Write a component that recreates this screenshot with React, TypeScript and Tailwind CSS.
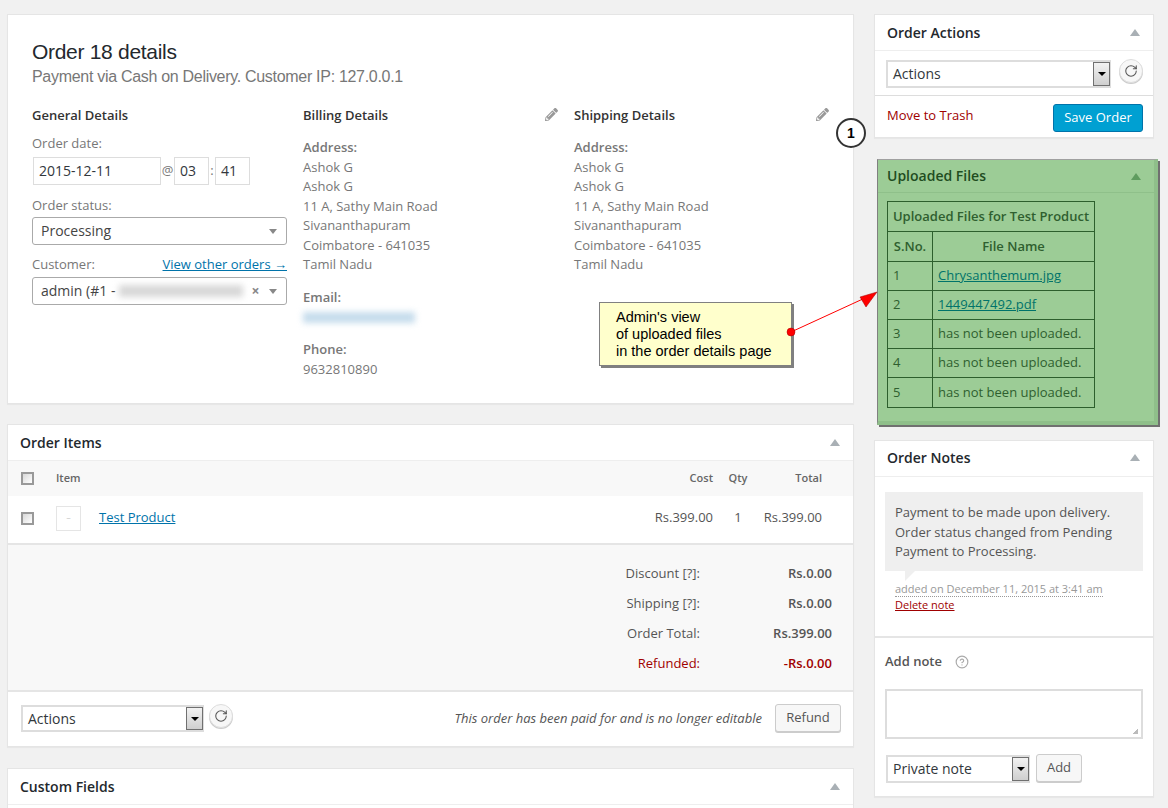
import { FaPencilAlt } from 'react-icons/fa'
import { CircleHelp, RotateCw } from 'lucide-react'

function PanelHead({ title, green, tight }: { title: string; green?: boolean; tight?: boolean }) {
  return (
    <div className={`flex items-center justify-between border-b pr-[13px] ${tight ? 'pb-[2px]' : ''} ${green ? 'h-[33px] border-[#8fc08a] pl-[9px]' : 'h-9 border-[#eeeeee] pl-3'}`}>
      <h2 className={`text-sm font-semibold ${green ? 'text-[#1f4d1f]' : 'text-[#23282d]'}`}>{title}</h2>
      <span className={`h-0 w-0 border-x-[5px] border-b-[7px] border-x-transparent ${green ? 'border-b-[#5f9c5f]' : 'border-b-[#a9b0b5]'}`} />
    </div>
  )
}

function OldSelect({ label, className }: { label: string; className: string }) {
  return (
    <div className={`flex items-center justify-between border-2 border-[#dddddd] bg-white pl-[5px] text-sm text-[#32373c] ${className}`}>
      <span>{label}</span>
      <span className="-mr-px flex h-full w-[17px] items-center justify-center border border-[#707070] bg-gradient-to-b from-[#f2f2f2] to-[#cfcfcf]">
        <span className="h-0 w-0 border-x-[4px] border-t-[4px] border-x-transparent border-t-black" />
      </span>
    </div>
  )
}

function Refresh() {
  return (
    <span className="flex h-6 w-6 items-center justify-center rounded-full border border-[#dddddd] bg-[#f7f7f7] shadow-[0_1px_0_#cccccc]">
      <RotateCw size={14} className="text-[#555555]" strokeWidth={1.8} />
    </span>
  )
}

function Address() {
  return (
    <div className="mt-3 text-[13px] leading-[19.5px] text-[#777777]">
      <div className="font-semibold">Address:</div>
      <div>Ashok G</div>
      <div>Ashok G</div>
      <div>11 A, Sathy Main Road</div>
      <div>Sivananthapuram</div>
      <div>Coimbatore - 641035</div>
      <div>Tamil Nadu</div>
    </div>
  )
}

function SectionHead({ title, edit }: { title: string; edit?: boolean }) {
  return (
    <div className="flex h-5 items-center justify-between">
      <h3 className="text-[13px] font-semibold text-[#333333]">{title}</h3>
      {edit && <FaPencilAlt size={13} className="mb-1 text-[#999999]" />}
    </div>
  )
}

function Total({ label, value, red }: { label: string; value: string; red?: boolean }) {
  return (
    <div className={`flex h-[30px] items-center justify-end text-[13px] ${red ? 'text-[#a00000]' : 'text-[#555555]'}`}>
      <span>{label}</span>
      <span className="w-[132px] text-right font-semibold">{value}</span>
    </div>
  )
}

function Checkbox() {
  return <span className="ml-[13px] h-[13px] w-[13px] border-2 border-[#999999] bg-gradient-to-br from-[#d8d8d8] to-white" />
}

const fileRows = [
  ['1', 'Chrysanthemum.jpg', true],
  ['2', '1449447492.pdf', true],
  ['3', 'has not been uploaded.', false],
  ['4', 'has not been uploaded.', false],
  ['5', 'has not been uploaded.', false],
] as const

export default function App() {
  return (
    <div className="relative flex h-[808px] w-[1168px] items-start overflow-hidden bg-[#f1f1f1] pl-[7px] pt-[14px] font-['Open_Sans',sans-serif] text-[13px] text-[#444444]">
      <main className="w-[847px]">
        <section className="h-[390px] border border-[#e5e5e5] bg-white pl-6 pt-[23px] shadow-[0_1px_1px_rgba(0,0,0,0.04)]">
          <h1 className="font-['Liberation_Sans',sans-serif] text-[21px] leading-[27px] tracking-[-0.3px] text-[#23282d]">Order 18 details</h1>
          <p className="mt-px font-['Liberation_Sans',sans-serif] text-base leading-[22px] tracking-[-0.3px] text-[#777777]">
            Payment via Cash on Delivery. Customer IP: 127.0.0.1
          </p>
          <div className="mt-[18px] flex gap-4">
            <div className="w-[255px]">
              <SectionHead title="General Details" />
              <div className="mt-2 leading-[19px] text-[#777777]">Order date:</div>
              <div className="mt-[4px] flex items-center pl-px">
                <span className="flex h-7 w-[128px] items-center border border-[#dddddd] pl-[5px] text-sm text-[#32373c]">2015-12-11</span>
                <span className="w-[13px] text-center text-[#777777]">@</span>
                <span className="flex h-7 w-[35px] items-center border border-[#dddddd] pl-[5px] text-sm text-[#32373c]">03</span>
                <span className="w-[6px] text-center text-[#777777]">:</span>
                <span className="flex h-7 w-[35px] items-center border border-[#dddddd] pl-[5px] text-sm text-[#32373c]">41</span>
              </div>
              <div className="mt-[11px] leading-[19px] text-[#777777]">Order status:</div>
              <div className="mt-[2px] flex h-7 items-center justify-between rounded-[3px] border border-[#aaaaaa] pl-2 pr-[9px] text-sm text-[#444444]">
                <span>Processing</span>
                <span className="h-0 w-0 border-x-[4px] border-t-[5px] border-x-transparent border-t-[#888888]" />
              </div>
              <div className="mt-[10px] flex justify-between leading-[19px]">
                <span className="text-[#777777]">Customer:</span>
                <a className="text-[#0073aa] underline">View other orders →</a>
              </div>
              <div className="mt-[3px] flex h-7 items-center rounded-[3px] border border-[#aaaaaa] pl-2 pr-[9px] text-sm text-[#444444]">
                <span>admin (#1 -</span>
                <span className="ml-1 h-3 w-[124px] bg-[#d8d8d8] blur-[3px]" />
                <span className="ml-2 text-sm font-bold text-[#888888]">×</span>
                <span className="ml-auto h-0 w-0 border-x-[4px] border-t-[5px] border-x-transparent border-t-[#888888]" />
              </div>
            </div>
            <div className="w-[255px]">
              <SectionHead title="Billing Details" edit />
              <Address />
              <div className="mt-[13px] text-[13px] leading-[19.5px] text-[#777777]">
                <div className="font-semibold">Email:</div>
                <div className="flex h-[20px] items-center">
                  <span className="h-[11px] w-[112px] bg-[#c5dcec] blur-[3px]" />
                </div>
                <div className="mt-[13px] font-semibold">Phone:</div>
                <div>9632810890</div>
              </div>
            </div>
            <div className="w-[255px]">
              <SectionHead title="Shipping Details" edit />
              <Address />
            </div>
          </div>
        </section>

        <section className="mt-5 border border-[#e5e5e5] bg-white shadow-[0_1px_1px_rgba(0,0,0,0.04)]">
          <PanelHead title="Order Items" />
          <div className="flex h-[35px] items-center bg-[#f8f8f8] text-[11px] font-semibold text-[#666666]">
            <Checkbox />
            <span className="ml-[22px]">Item</span>
            <span className="ml-auto">Cost</span>
            <span className="w-[50px] shrink-0 text-center">Qty</span>
            <span className="w-[90px] shrink-0 pr-[31px] text-right">Total</span>
          </div>
          <div className="flex h-[49px] items-center border-b-2 border-[#e5e5e5] pb-[3px] text-[13px] text-[#555555]">
            <Checkbox />
            <span className="ml-[22px] flex h-[25px] w-[25px] items-center justify-center border border-[#e5e5e5] text-[8px] text-[#bbbbbb]">~</span>
            <a className="ml-[18px] text-[#0073aa] underline">Test Product</a>
            <span className="ml-auto">Rs.399.00</span>
            <span className="w-[50px] shrink-0 text-center">1</span>
            <span className="w-[90px] shrink-0 pr-[31px] text-right">Rs.399.00</span>
          </div>
          <div className="border-b-2 border-[#e5e5e5] bg-[#f8f8f8] pb-[11px] pr-[21px] pt-[14px]">
            <Total label="Discount [?]:" value="Rs.0.00" />
            <Total label="Shipping [?]:" value="Rs.0.00" />
            <Total label="Order Total:" value="Rs.399.00" />
            <Total label="Refunded:" value="-Rs.0.00" red />
          </div>
          <div className="flex h-[54px] items-start pl-[13px] pr-3 pt-[11px]">
            <OldSelect label="Actions" className="mt-[2px] h-[27px] w-[183px]" />
            <span className="ml-[5px] mt-px"><Refresh /></span>
            <em className="ml-auto mt-[6px] text-[#555555]">This order has been paid for and is no longer editable</em>
            <span className="ml-[13px] mt-px flex h-7 w-[66px] items-center justify-center rounded-[3px] border border-[#cccccc] bg-[#f7f7f7] text-[#555555] shadow-[0_1px_0_#cccccc]">Refund</span>
          </div>
        </section>

        <section className="mt-[21px] border border-[#e5e5e5] bg-white">
          <PanelHead title="Custom Fields" />
          <div className="h-10" />
        </section>
      </main>

      <aside className="ml-5 w-[280px]">
        <section className="border border-[#e5e5e5] bg-white shadow-[0_1px_1px_rgba(0,0,0,0.04)]">
          <PanelHead title="Order Actions" />
          <div className="flex h-[45px] items-start border-b border-[#dddddd] pl-[11px] pt-[9px]">
            <OldSelect label="Actions" className="h-7 w-[225px]" />
            <span className="ml-2 -mt-px"><Refresh /></span>
          </div>
          <div className="flex h-[41px] items-start justify-between pl-3 pr-[10px] pt-2">
            <a className="mt-[2px] text-[#a00000]">Move to Trash</a>
            <span className="flex h-7 w-[90px] items-center justify-center rounded-[3px] border border-[#0073aa] bg-[#00a0d2] text-[#ffffff]">Save Order</span>
          </div>
        </section>

        <section className="ml-[3px] mt-[21px] h-[266px] w-[281px] border-b-[4px] border-l border-r-[4px] border-t border-b-[#8fbf8a] border-l-[#808080] border-r-[#8fbf8a] border-t-[#a0a0a0] bg-[#9ccc96] shadow-[2px_2px_0_#707070]">
          <PanelHead title="Uploaded Files" green />
          <table className="ml-[9px] mt-2 w-[208px] table-fixed border-collapse text-[13px] text-[#2f5f2f]">
            <colgroup>
              <col className="w-[45px]" />
              <col />
            </colgroup>
            <thead>
              <tr className="h-[30px]">
                <th colSpan={2} className="border border-[#2d5f2d] text-center font-semibold">Uploaded Files for Test Product</th>
              </tr>
              <tr className="h-[30px]">
                <th className="border border-[#2d5f2d] font-semibold">S.No.</th>
                <th className="border border-[#2d5f2d] font-semibold">File Name</th>
              </tr>
            </thead>
            <tbody>
              {fileRows.map(([n, name, link]) => (
                <tr key={n} className={n === '5' ? 'h-[30px]' : 'h-[29px]'}>
                  <td className="border border-[#2d5f2d] pl-[5px]">{n}</td>
                  <td className="whitespace-nowrap border border-[#2d5f2d] pl-[5px]">
                    {link ? <a className="text-[#00736a] underline">{name}</a> : name}
                  </td>
                </tr>
              ))}
            </tbody>
          </table>
        </section>

        <section className="mt-[15px] h-[357px] border border-[#e5e5e5] bg-white shadow-[0_1px_1px_rgba(0,0,0,0.04)]">
          <PanelHead title="Order Notes" tight />
          <div className="h-[161px] border-b-2 border-[#e5e5e5] pl-[10px] pr-[10px] pt-[15px]">
            <div className="relative h-[79px] bg-[#efefef] px-[10px] pt-[11px] leading-[19.5px] text-[#555555]">
              Payment to be made upon delivery. Order status changed from Pending Payment to Processing.
              <span className="absolute left-[20px] top-full h-0 w-0 border-r-[10px] border-t-[10px] border-r-transparent border-t-[#efefef]" />
            </div>
            <div className="ml-[10px] mt-[10px] w-fit border-b border-dotted border-[#999999] text-[11px] leading-[15px] text-[#999999]">added on December 11, 2015 at 3:41 am</div>
            <a className="ml-[10px] block text-[11px] leading-[15px] text-[#a00000] underline">Delete note</a>
          </div>
          <div className="pl-[10px] pr-[10px]">
            <div className="mt-[14px] flex h-5 items-center font-semibold text-[#555555]">
              Add note
              <CircleHelp size={14} className="ml-[13px] text-[#aaaaaa]" />
            </div>
            <div className="relative mt-[17px] h-[50px] border-2 border-[#dddddd] bg-white">
              <span className="absolute bottom-[3px] right-[3px] h-[6px] w-[6px] bg-[linear-gradient(135deg,transparent_50%,#bbbbbb_50%)]" />
            </div>
            <div className="mt-[15px] flex items-start">
              <OldSelect label="Private note" className="ml-px mt-px h-7 w-[144px]" />
              <span className="ml-[6px] flex h-7 w-[46px] items-center justify-center rounded-[3px] border border-[#cccccc] bg-[#f7f7f7] text-[#555555] shadow-[0_1px_0_#cccccc]">Add</span>
            </div>
          </div>
        </section>
      </aside>

      {/* callout annotations on top of the page */}
      <span className="absolute left-[836px] top-[118px] flex h-[30px] w-[30px] items-center justify-center rounded-full border-2 border-[#333333] bg-white font-['Liberation_Sans',sans-serif] text-sm font-bold text-black">1</span>
      <div className="absolute left-[599px] top-[302px] h-[64px] w-[193px] border border-[#808080] bg-[#ffffcc] pl-4 pt-[6px] font-['Liberation_Sans',sans-serif] text-[14.5px] leading-[17px] text-black shadow-[2px_2px_0_#808080]">
        Admin's view
        <br />
        of uploaded files
        <br />
        in the order details page
      </div>
      <svg className="absolute left-[780px] top-[280px]" width="110" height="65" viewBox="0 0 110 65">
        <line x1="11" y1="52" x2="85" y2="18" stroke="#ff0000" strokeWidth="1" />
        <polygon points="97,12 80,17 86,27" fill="#ff0000" stroke="#a00000" strokeWidth="0.5" />
        <circle cx="11" cy="52" r="4" fill="#ff0000" stroke="#a00000" strokeWidth="0.5" />
      </svg>
    </div>
  )
}
